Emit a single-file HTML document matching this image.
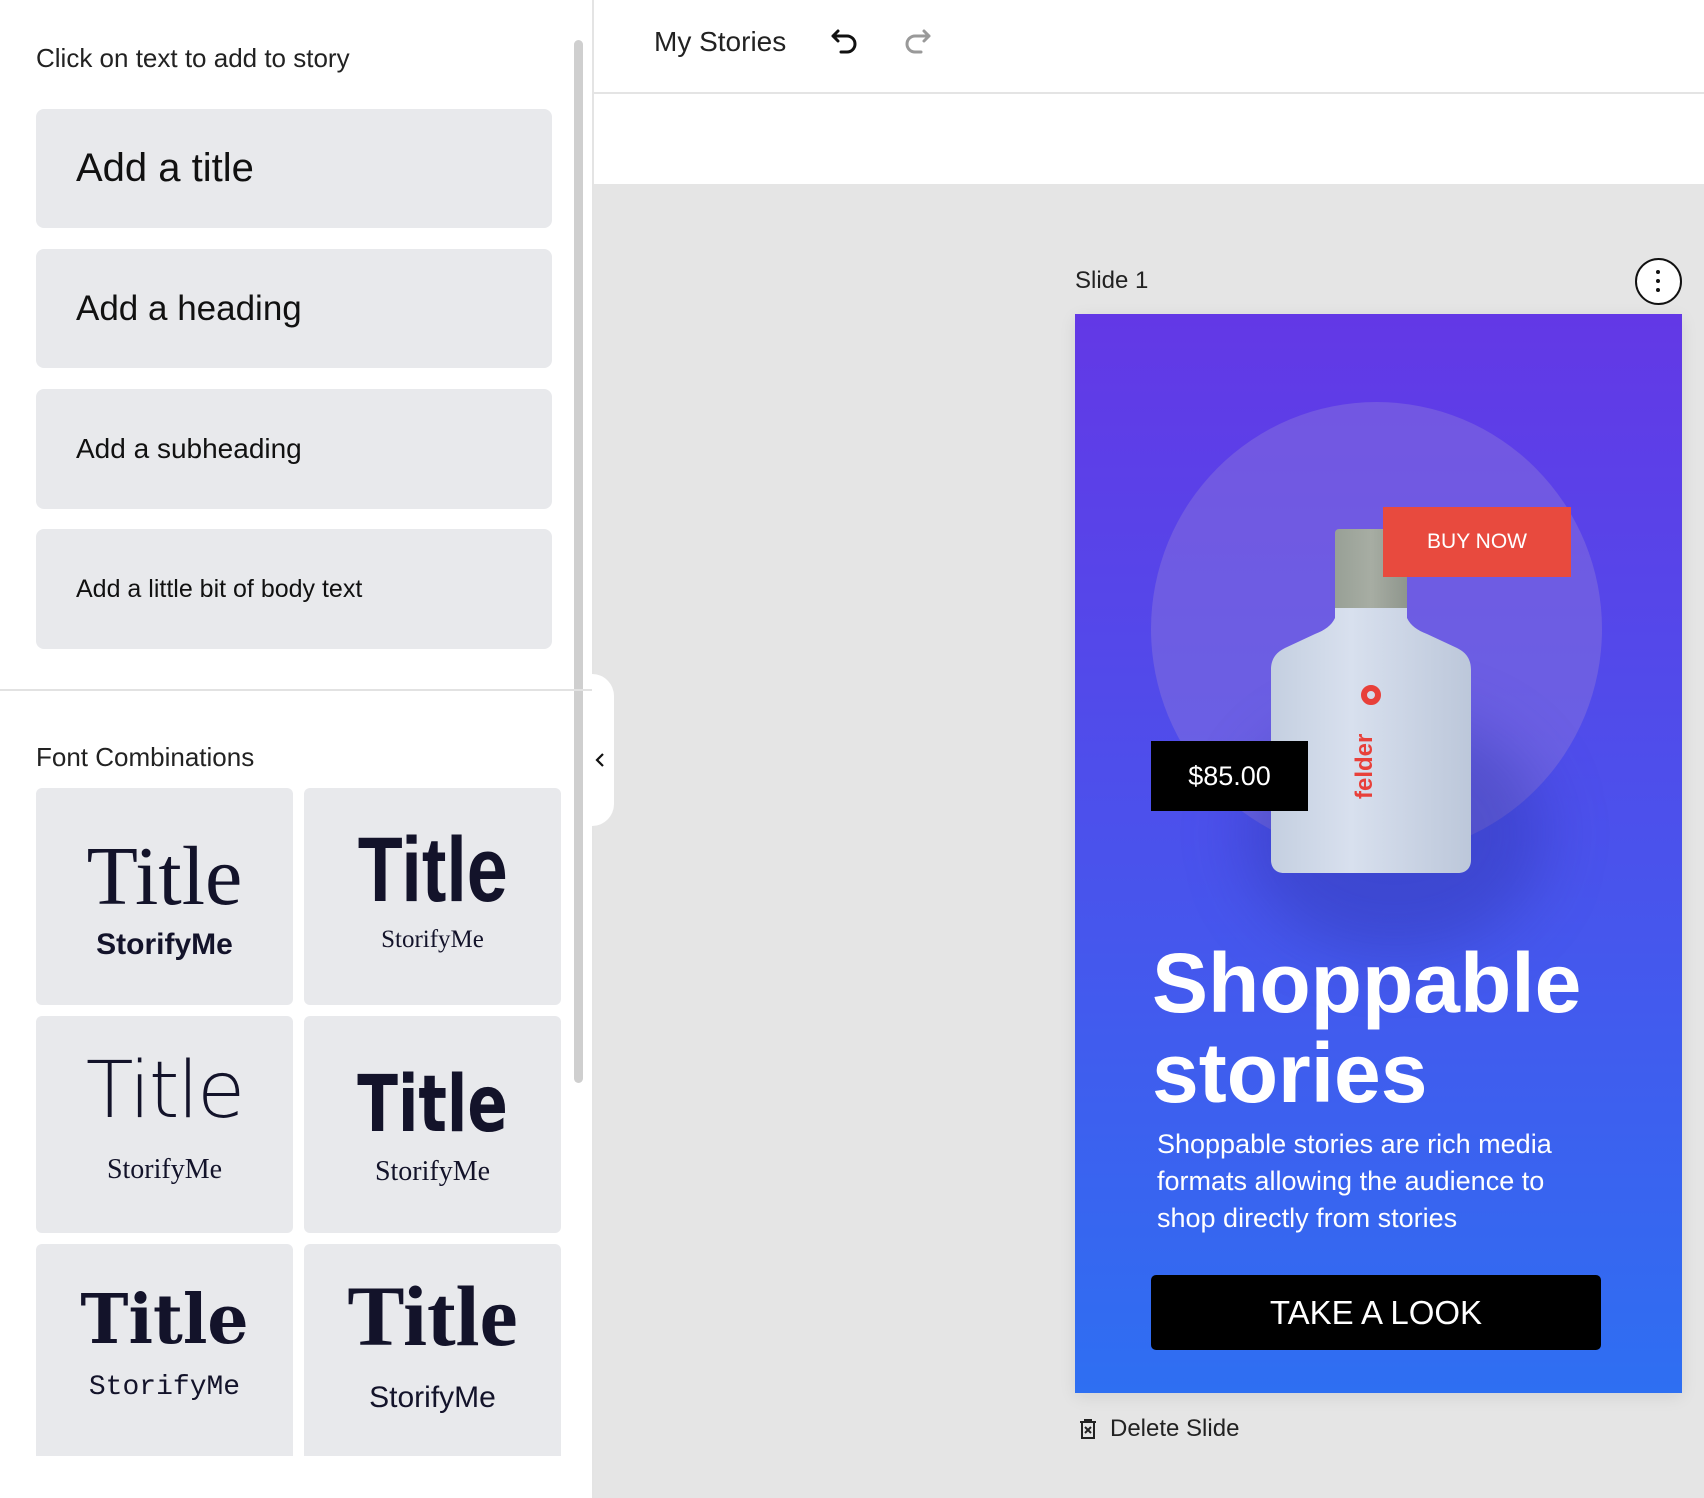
<!DOCTYPE html>
<html><head><meta charset="utf-8"><style>
*{margin:0;padding:0;box-sizing:border-box}
body{width:1704px;height:1498px;overflow:hidden;background:#fff;font-family:"Liberation Sans",sans-serif;color:#111;position:relative}
.abs{position:absolute}
.card{position:absolute;left:36px;width:516px;background:#e8e9ec;border-radius:8px;display:flex;align-items:center;padding-left:40px;color:#111}
.fc{position:absolute;width:257px;background:#e8e9ec;border-radius:6px;text-align:center;color:#13132a}
.fc .t{position:absolute;left:0;right:0}
.fc .s{position:absolute;left:0;right:0}
</style></head><body>
<div class="abs" style="left:36px;top:43px;font-size:26px;color:#222">Click on text to add to story</div>
<div class="card" style="top:109px;height:119px;font-size:40px">Add a title</div>
<div class="card" style="top:249px;height:119px;font-size:35px">Add a heading</div>
<div class="card" style="top:389px;height:120px;font-size:28px">Add a subheading</div>
<div class="card" style="top:529px;height:120px;font-size:25px">Add a little bit of body text</div>
<div class="abs" style="left:574px;top:40px;width:9px;height:1043px;background:#cfcfcf;border-radius:5px"></div>
<div class="abs" style="left:0;top:689px;width:592px;height:2px;background:#e2e2e2"></div>
<div class="abs" style="left:36px;top:742px;font-size:26px;color:#222">Font Combinations</div>

<div class="fc" style="left:36px;top:788px;height:217px">
 <div class="t" style="top:40px;font:84px 'Liberation Serif',serif">Title</div>
 <div class="s" style="top:140px;font:bold 30px 'Liberation Sans Narrow','Liberation Sans',sans-serif">StorifyMe</div></div>
<div class="fc" style="left:304px;top:788px;height:217px">
 <div class="t" style="top:30px;font:bold 92px 'Liberation Sans Narrow',sans-serif"><span style="display:inline-block;transform:scaleX(.8)">Title</span></div>
 <div class="s" style="top:138px;font:25px 'Liberation Serif',serif">StorifyMe</div></div>
<div class="fc" style="left:36px;top:1016px;height:217px">
 <div class="t" style="top:30px;font:300 78px 'DejaVu Sans',sans-serif;letter-spacing:-2px">Title</div>
 <div class="s" style="top:138px;font:28px 'Liberation Serif',serif">StorifyMe</div></div>
<div class="fc" style="left:304px;top:1016px;height:217px">
 <div class="t" style="top:44px;font:bold 78px 'DejaVu Sans Condensed',sans-serif"><span style="display:inline-block;transform:scaleX(.85)">Title</span></div>
 <div class="s" style="top:140px;font:28px 'Liberation Serif',serif">StorifyMe</div></div>
<div class="fc" style="left:36px;top:1244px;height:212px;border-radius:6px 6px 0 0">
 <div class="t" style="top:36px;font:bold 68px 'DejaVu Serif',serif"><span style="display:inline-block;transform:scaleX(.95)">Title</span></div>
 <div class="s" style="top:128px;font:28px 'Liberation Mono',monospace">StorifyMe</div></div>
<div class="fc" style="left:304px;top:1244px;height:212px;border-radius:6px 6px 0 0">
 <div class="t" style="top:22px;font:bold 86px 'Liberation Serif',serif">Title</div>
 <div class="s" style="top:137px;font:30px 'Liberation Sans Narrow',sans-serif">StorifyMe</div></div>

<div class="abs" style="left:592px;top:0;width:2px;height:1498px;background:#e4e4e4"></div>
<div class="abs" style="left:594px;top:92px;width:1110px;height:2px;background:#e4e4e4"></div>
<div class="abs" style="left:594px;top:184px;width:1110px;height:1314px;background:#e5e5e5"></div>
<div class="abs" style="left:592px;top:674px;width:22px;height:152px;background:#fff;border-radius:0 22px 22px 0"></div>
<svg class="abs" style="left:593px;top:751px" width="14" height="18" viewBox="0 0 14 18"><path d="M10 3L4 9l6 6" fill="none" stroke="#111" stroke-width="2.2"/></svg>

<div class="abs" style="left:654px;top:26px;font-size:28px;color:#222">My Stories</div>
<svg class="abs" style="left:830px;top:27px" width="32" height="30" viewBox="0 0 32 30"><path d="M8 4L3 9l5 5M3 9h14a8 8 0 0 1 0 16h-6" fill="none" stroke="#111" stroke-width="3" stroke-linecap="round" stroke-linejoin="round"/></svg>
<svg class="abs" style="left:900px;top:27px" width="32" height="30" viewBox="0 0 32 30"><path d="M24 4l5 5-5 5M29 9H15a8 8 0 0 0 0 16h6" fill="none" stroke="#999" stroke-width="3" stroke-linecap="round" stroke-linejoin="round"/></svg>

<div class="abs" style="left:1075px;top:267px;font-size:24px;color:#222">Slide 1</div>
<div class="abs" style="left:1635px;top:258px;width:47px;height:47px;border:2px solid #111;border-radius:50%;background:#fff"></div>
<div class="abs" style="left:1656px;top:270px;width:4px;height:4px;border-radius:50%;background:#111;box-shadow:0 9px 0 #111,0 18px 0 #111"></div>

<div class="abs" style="left:1075px;top:314px;width:607px;height:1079px;background:linear-gradient(#6338e6 0%,#4a52ec 50%,#2e6ff2 100%);overflow:hidden;box-shadow:0 4px 16px rgba(0,0,0,.08)">
 <div class="abs" style="left:76px;top:88px;width:451px;height:454px;border-radius:50%;background:rgba(140,120,220,.45)"></div>
 <div class="abs" style="left:170px;top:400px;width:300px;height:240px;border-radius:50%;background:rgba(40,50,160,.35);filter:blur(30px)"></div>
 <div class="abs" style="left:260px;top:215px;width:72px;height:82px;background:linear-gradient(90deg,#98a096,#a7ada3,#8f968d);border-radius:4px 4px 0 0"></div>
 <svg class="abs" style="left:194px;top:290px" width="204" height="272" viewBox="0 0 204 272"><defs><linearGradient id="g" x1="0" x2="1"><stop offset="0" stop-color="#c4cfe0"/><stop offset=".4" stop-color="#d8e0ee"/><stop offset="1" stop-color="#bcc7da"/></linearGradient></defs><path d="M66 4h72v10c4 8 10 12 20 16l30 14c10 5 14 12 14 22v190c0 8-5 13-13 13H15c-8 0-13-5-13-13V66c0-10 4-17 14-22l30-14c10-4 16-8 20-16z" fill="url(#g)"/></svg>
 <div class="abs" style="left:286px;top:371px;width:20px;height:20px;border-radius:50%;border:6px solid #e8403a"></div>
 <div class="abs" style="left:170px;top:485px;font:bold 24px 'Liberation Sans',sans-serif;color:#e8403a;transform:rotate(-90deg);transform-origin:left top;left:276px">felder</div>
 <div class="abs" style="left:308px;top:193px;width:188px;height:70px;background:#e84a3e;color:#fff;font-size:21px;display:flex;align-items:center;justify-content:center">BUY NOW</div>
 <div class="abs" style="left:76px;top:427px;width:157px;height:70px;background:#000;color:#fff;font-size:27px;display:flex;align-items:center;justify-content:center">$85.00</div>
 <div class="abs" style="left:77px;top:624px;font:bold 84px/90px 'Liberation Sans',sans-serif;color:#fff">Shoppable<br>stories</div>
 <div class="abs" style="left:82px;top:812px;font:27px/37px 'Liberation Sans',sans-serif;color:#fff">Shoppable stories are rich media<br>formats allowing the audience to<br>shop directly from stories</div>
 <div class="abs" style="left:76px;top:961px;width:450px;height:75px;background:#000;border-radius:5px;color:#fff;font-size:33px;display:flex;align-items:center;justify-content:center">TAKE A LOOK</div>
</div>

<svg class="abs" style="left:1078px;top:1418px" width="20" height="22" viewBox="0 0 20 22"><path d="M2 4h16M7 4V2h6v2M4 4v16h12V4M7 9l6 6M13 9l-6 6" fill="none" stroke="#222" stroke-width="2"/></svg>
<div class="abs" style="left:1110px;top:1415px;font-size:24px;color:#222">Delete Slide</div>
</body></html>
